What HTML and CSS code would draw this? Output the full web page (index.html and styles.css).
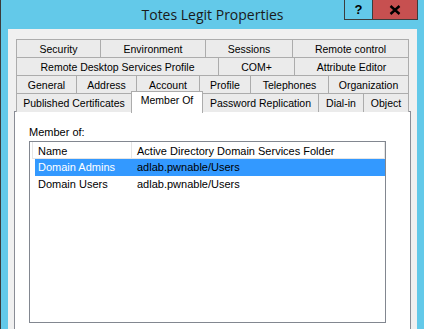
FILE: index.html
```html
<!DOCTYPE html>
<html lang="en">

<head>
    <meta charset="UTF-8">
    <meta name="viewport" content="width=device-width, initial-scale=1.0">
    <title>Totes Legit Properties</title>
    <link rel="stylesheet" href="styles.css">
</head>

<body>
    <div class="window">

        <div class="titlebar">
            <div class="title">Totes Legit Properties</div>
            <div class="caption-btns">
                <div class="cap-btn help">?</div>
                <div class="cap-btn close">
                    <svg width="12" height="10" viewBox="0 0 12 10">
                        <path d="M1.5 1 L10.5 9 M10.5 1 L1.5 9" stroke="#000" stroke-width="2.4" fill="none" />
                    </svg>
                </div>
            </div>
        </div>

        <div class="panel">
            <div class="tabs">
                <div class="tab-row row1">
                    <div class="tab">Security</div>
                    <div class="tab">Environment</div>
                    <div class="tab">Sessions</div>
                    <div class="tab">Remote control</div>
                </div>
                <div class="tab-row row2">
                    <div class="tab">Remote Desktop Services Profile</div>
                    <div class="tab">COM+</div>
                    <div class="tab">Attribute Editor</div>
                </div>
                <div class="tab-row row3">
                    <div class="tab">General</div>
                    <div class="tab">Address</div>
                    <div class="tab">Account</div>
                    <div class="tab">Profile</div>
                    <div class="tab">Telephones</div>
                    <div class="tab">Organization</div>
                </div>
                <div class="tab-row row4">
                    <div class="tab">Published Certificates</div>
                    <div class="tab active">Member Of</div>
                    <div class="tab">Password Replication</div>
                    <div class="tab">Dial-in</div>
                    <div class="tab">Object</div>
                </div>
            </div>

            <div class="page">
                <div class="caption">Member of:</div>
                <div class="list">
                    <div class="list-head">
                        <div class="col-name">Name</div>
                        <div class="col-folder">Active Directory Domain Services Folder</div>
                    </div>
                    <div class="list-row selected">
                        <div class="col-name">Domain Admins</div>
                        <div class="col-folder">adlab.pwnable/Users</div>
                    </div>
                    <div class="list-row">
                        <div class="col-name">Domain Users</div>
                        <div class="col-folder">adlab.pwnable/Users</div>
                    </div>
                </div>
            </div>
        </div>

    </div>
</body>

</html>
```

FILE: styles.css
```css
body {
    margin: 0;
    font-family: "Liberation Sans", Arial, sans-serif;
}

.window {
    width: 424px;
    height: 329px;
    background-color: #63c9e9;
    border-left: 1px solid #3b3b3b;
    box-sizing: border-box;
    overflow: hidden;
}

/* title bar */

.titlebar {
    height: 29px;
    display: grid;
    grid-template-columns: 1fr auto 1fr;
}

.title {
    grid-column: 2;
    font-family: "Open Sans", sans-serif;
    font-size: 14px;
    line-height: 20px;
    padding-top: 5px;
    color: #1a1a1a;
}

.caption-btns {
    grid-column: 3;
    justify-self: end;
    align-self: start;
    display: flex;
    margin-right: 6px;
}

.cap-btn {
    height: 19px;
    border-bottom: 1px solid #3c3c3c;
    display: flex;
    justify-content: center;
    align-items: center;
}

.help {
    width: 27px;
    border-left: 1px solid #3c3c3c;
    border-right: 1px solid #3c3c3c;
    font-weight: bold;
    font-size: 13px;
    color: #000;
}

.close {
    width: 44px;
    border-right: 1px solid #3c3c3c;
    background-color: #c75050;
}

/* dialog body */

.panel {
    margin: 0 7px;
    height: 300px;
    padding: 10px 6px 0 6px;
    background-color: #f0f0f0;
}

.tabs {
    margin: 0 2px;
}

.tab-row {
    display: grid;
    height: 18px;
}

.row1 {
    grid-template-columns: 84px 105px 87px 117px;
}

.row2 {
    grid-template-columns: 202px 76px 115px;
}

.row3 {
    grid-template-columns: 60px 60px 63px 51px 78px 81px;
}

.row4 {
    grid-template-columns: 115px 71px 116px 45px 46px;
}

.tab {
    border-top: 1px solid #acacac;
    border-left: 1px solid #acacac;
    background-color: #ebebeb;
    font-size: 10.5px;
    line-height: 17px;
    padding-top: 1px;
    text-align: center;
    white-space: nowrap;
    color: #000;
}

.tab:last-child {
    border-right: 1px solid #acacac;
}

.tab.active {
    position: relative;
    z-index: 1;
    margin: -2px -1px -1px 0;
    border-right: 1px solid #acacac;
    background-color: #fff;
    padding-top: 0;
}

.page {
    height: 230px;
    background-color: #fff;
    border: 1px solid #898c95;
    padding: 13px 0 0 14px;
}

.caption {
    font-size: 11px;
    line-height: 14px;
    color: #000;
}

.list {
    margin-top: 2px;
    width: 357px;
    height: 182px;
    box-sizing: border-box;
    border: 1px solid #828790;
    padding-left: 2px;
}

.list-head {
    display: flex;
    height: 17px;
    box-sizing: border-box;
    border-bottom: 1px solid #e5e5e5;
    font-size: 11px;
    color: #000;
}

.list-head div {
    padding-top: 3px;
    line-height: 13px;
    border-right: 1px solid #e5e5e5;
}

.list-head .col-name {
    width: 93px;
    padding-left: 5px;
    border-left: 1px solid #e5e5e5;
}

.list-head .col-folder {
    flex: 1;
    padding-left: 5px;
}

.list-row {
    display: flex;
    margin-left: 3px;
    height: 17px;
    font-size: 11px;
    line-height: 17px;
    color: #000;
}

.list-row .col-name {
    width: 96px;
    padding-left: 3px;
}

.list-row .col-folder {
    flex: 1;
    padding-left: 3px;
}

.list-row.selected {
    background-color: #3399ff;
}

.selected .col-name {
    color: #fff;
}
```
